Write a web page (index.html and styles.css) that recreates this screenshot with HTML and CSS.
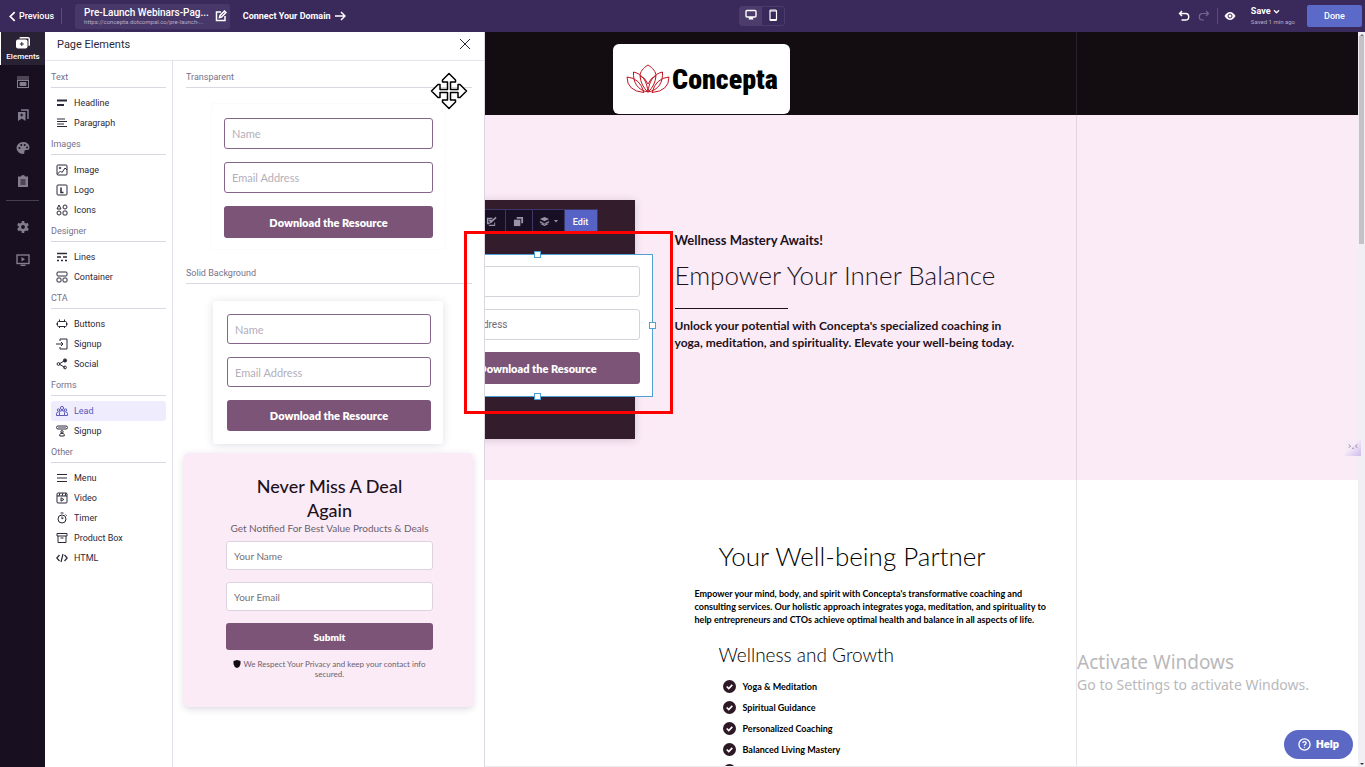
FILE: index.html
```html
<!DOCTYPE html>
<html lang="en">
<head>
    <meta charset="utf-8">
    <title>Page Builder</title>
    <link rel="stylesheet" href="styles.css">
</head>
<body>
    <svg class="sprite" aria-hidden="true">
        <symbol id="i-headline" viewBox="0 0 12 12"><path d="M1 3.500h10M1 8h7" stroke-width="2"/></symbol>
        <symbol id="i-paragraph" viewBox="0 0 12 12"><path d="M1 2h8M1 4.500h10M1 7h7M1 9.500h10"/></symbol>
        <symbol id="i-image" viewBox="0 0 12 12"><rect x="1" y="1" width="10" height="10" rx="1"/><path d="M1.500 10l3-3 1.500 1.500L9 4l2 2"/><circle cx="4" cy="4" r=".8"/></symbol>
        <symbol id="i-logo" viewBox="0 0 12 12"><rect x="1" y="1" width="10" height="10" rx="1"/><path d="M5 3.500v5h2.500" stroke-width="1.500"/></symbol>
        <symbol id="i-icons" viewBox="0 0 12 12"><path d="M3 1L5 5H1z"/><circle cx="9" cy="3" r="2"/><circle cx="3" cy="9" r="2"/><rect x="7" y="7" width="4" height="4" rx="1"/></symbol>
        <symbol id="i-lines" viewBox="0 0 12 12"><path d="M1 2.500h10M1 6h4M7 6h4M1 9.500h2M5 9.500h2M9 9.500h2" stroke-width="1.400"/></symbol>
        <symbol id="i-container" viewBox="0 0 12 12"><rect x="1" y="1" width="10" height="4" rx="1"/><rect x="1" y="7" width="4" height="4" rx="1"/><rect x="7" y="7" width="4" height="4" rx="1"/></symbol>
        <symbol id="i-buttons" viewBox="0 0 12 12"><rect x="1.500" y="3.500" width="9" height="5" rx="1"/><path d="M0 6h1.500M10.500 6h1.500M3.500 1.500v2M8.500 1.500v2M3.500 8.500v1.500M8.500 8.500v1.500"/></symbol>
        <symbol id="i-enter" viewBox="0 0 12 12"><path d="M4 3V1h7v10H4V9M0 6h7M5 4l2 2-2 2"/></symbol>
        <symbol id="i-social" viewBox="0 0 12 12"><path d="M9 2.500L3 6l6 3.500"/><circle cx="9" cy="2.500" r="1.600" fill="currentColor"/><circle cx="2.500" cy="6" r="1.400"/><circle cx="9" cy="9.500" r="1.400"/></symbol>
        <symbol id="i-lead" viewBox="0 0 12 12"><circle cx="6" cy="3" r="1.600"/><circle cx="2.500" cy="5" r="1.200"/><circle cx="9.500" cy="5" r="1.200"/><path d="M3.500 10.500V7.500Q3.500 5.500 6 5.500T8.500 7.500v3zM3.500 10.500h-3v-2q0-1.500 2-1.500M8.500 10.500h3v-2q0-1.500-2-1.500"/></symbol>
        <symbol id="i-signup" viewBox="0 0 12 12"><rect x="0.500" y="1" width="11" height="3" rx="1.500"/><path d="M2.500 2.500h7" stroke-dasharray="1 1"/><circle cx="6" cy="6.800" r="1.200"/><path d="M3.800 11V9.500Q4 8.300 6 8.300T8.200 9.500V11z"/></symbol>
        <symbol id="i-menu" viewBox="0 0 12 12"><path d="M1 2.500h10M1 6h10M1 9.500h10" stroke-width="1.200"/></symbol>
        <symbol id="i-video" viewBox="0 0 12 12"><rect x="1" y="1" width="10" height="10" rx="1"/><path d="M1 4h10M4 1L3 4M7 1L6 4M10 1L9 4M5 5.800v3.400L7.800 7.500z"/></symbol>
        <symbol id="i-timer" viewBox="0 0 12 12"><circle cx="6" cy="7" r="4"/><path d="M6 7V4.500M4.500 1h3M9.500 2.500l1.200 1.200M6 7l1.500-1"/></symbol>
        <symbol id="i-box" viewBox="0 0 12 12"><path d="M1 1.500h10v2.500H1zM2 4v6.500h8V4M4.500 6h3"/></symbol>
        <symbol id="i-code" viewBox="0 0 12 12"><path d="M3.500 3L.8 6l2.700 3M8.500 3l2.700 3-2.700 3M7 2L5 10" stroke-width="1.200"/></symbol>
        <symbol id="i-check" viewBox="0 0 14 14"><circle cx="7" cy="7" r="7" fill="currentColor" stroke="none"/><path d="M4 7l2.200 2.200L10 5.200" stroke="#fff" stroke-width="1.800"/></symbol>
    </svg>

    <header class="topbar">
        <div class="topbar-group">
            <button class="previous"><svg class="chevron" viewBox="0 0 8 12"><path d="M6.500 1L1.500 6l5 5" stroke-width="2"/></svg>Previous</button>
            <span class="divider"></span>
            <div class="page-name">
                <div>
                    <div class="page-title">Pre-Launch Webinars-Pag...</div>
                    <div class="page-url">https://concepta.dotcompal.co/pre-launch-...</div>
                </div>
                <button aria-label="Rename page"><svg class="icon" viewBox="0 0 12 12"><path d="M6 2H1.500v8.500H10V6M4.500 7.500l.5-2L9.500 1l1.500 1.500L6.500 7z" stroke-width="1.500"/></svg></button>
            </div>
            <a class="connect" href="#">Connect Your Domain <svg class="icon" viewBox="0 0 12 12"><path d="M1 6h10M7 2l4 4-4 4" stroke-width="1.500"/></svg></a>
        </div>
        <div class="devices">
            <button class="active" aria-label="Desktop view"><svg class="icon" viewBox="0 0 12 12"><rect x="1" y="1.500" width="10" height="6.500" rx="1" stroke-width="1.400"/><path d="M3.500 10.500h5L7.500 8h-3z" fill="currentColor" stroke="none"/></svg></button>
            <button aria-label="Mobile view"><svg class="icon" viewBox="0 0 12 12"><rect x="3" y="1" width="6.500" height="10.500" rx="1" stroke-width="1.200"/><path d="M3 2h6M3 10.500h6"/></svg></button>
        </div>
        <div class="topbar-group">
            <div class="history">
                <button aria-label="Undo"><svg class="icon" viewBox="0 0 12 12"><path d="M4 1L1.500 3.500 4 6M1.500 3.500H7.500a3 3 0 010 6.500H3.500" stroke-width="1.400"/></svg></button>
                <button class="disabled" aria-label="Redo" disabled><svg class="icon" viewBox="0 0 12 12"><path d="M8 1l2.500 2.500L8 6M10.500 3.500H4.500a3 3 0 000 6.500h1.500" stroke-width="1.200"/></svg></button>
            </div>
            <span class="divider"></span>
            <button class="preview" aria-label="Preview"><svg class="icon" viewBox="0 0 12 12"><path d="M.5 6Q3 2 6 2t5.500 4Q9 10 6 10T.5 6z" fill="currentColor" stroke="none"/><circle cx="6" cy="6" r="2" stroke="#3a295b" fill="#fff"/></svg></button>
            <div class="save">
                <button>Save <svg viewBox="0 0 8 6"><path d="M1 1.500l3 3 3-3" stroke-width="1.500"/></svg></button>
                <small>Saved 1 min ago</small>
            </div>
            <button class="done">Done</button>
        </div>
    </header>

    <div class="workspace">
        <nav class="rail">
            <button class="rail-item active"><svg viewBox="0 0 14 12"><path d="M4 0h8q2 0 2 2v6q0 1-1.500 1V1.500H3.500Q3.500 0 4 0z" fill="currentColor" stroke="none"/><rect x="0" y="2.500" width="11.500" height="9" rx="2" fill="currentColor" stroke="none"/><path d="M5.800 5v4M3.800 7h4" stroke="#292134"/></svg>Elements</button>
            <button class="rail-item" aria-label="Sections"><svg viewBox="0 0 14 12"><path d="M1 1h12M1 3h12"/><rect x="1.500" y="4.500" width="11" height="7"/><path d="M4 6.500h6v3H4z" fill="currentColor"/></svg></button>
            <button class="rail-item" aria-label="Saved blocks"><svg viewBox="0 0 14 12"><path d="M5 1h7v9" stroke-width="1.500"/><path d="M2 3h7.500v9L5.800 9.500 2 12z" fill="currentColor" stroke="none"/><path d="M5.700 4.500v3M4.200 6h3" stroke="#180f21"/></svg></button>
            <button class="rail-item" aria-label="Theme"><svg viewBox="0 0 14 12"><path d="M7 0a6.500 6 0 000 12q2 0 1.300-1.800Q8 8 10 8h1.500Q13.500 8 13.500 5.500 13 0 7 0z" fill="currentColor" stroke="none"/><g fill="#180f21" stroke="none"><circle cx="3.500" cy="6" r="1"/><circle cx="5.300" cy="3" r="1"/><circle cx="8.700" cy="3" r="1"/><circle cx="11" cy="5.500" r="1"/></g></svg></button>
            <button class="rail-item" aria-label="Pages"><svg viewBox="0 0 14 12"><path d="M2 1.500h3q0-1.500 2-1.500t2 1.500h3V12H2z" fill="currentColor" stroke="none"/><path d="M4.500 5h5M4.500 7h5M4.500 9h5" stroke="#180f21"/></svg></button>
            <span class="rail-rule"></span>
            <button class="rail-item" aria-label="Settings"><svg viewBox="0 0 14 12"><circle cx="7" cy="6" r="3.200" stroke-width="2.600"/><path d="M7 0v2M7 10v2M1.800 3l1.800 1M10.400 8l1.800 1M1.800 9l1.800-1M10.400 4l1.800-1" stroke-width="2.600"/></svg></button>
            <button class="rail-item" aria-label="Tutorials"><svg viewBox="0 0 14 12"><rect x="1" y="1" width="12" height="8.500" stroke-width="1.400"/><path d="M5.500 3v4.500L9 5.200z" fill="currentColor" stroke="none"/><path d="M4.500 11.300h5" stroke-width="1.400"/></svg></button>
        </nav>

        <main class="canvas">
            <div class="site-header">
                <div class="brand">
                    <svg class="lotus" viewBox="0 0 44 30"><path d="M22 1C17 4 14 8 14 12q1 10 8 16 7-6 8-16C30 8 27 4 22 1zM22 28C21 18 17 10 7.500 8 7 18 11 26 22 28zM22 28c1-10 5-18 14.500-20C37 18 33 26 22 28zM18 28.500Q14 14 1 13 1 27 18 28.500zM26 28.500Q30 14 43 13 43 27 26 28.500zM14 12q5 1 8 8 3-7 8-8"/></svg>
                    <span>Concepta</span>
                </div>
            </div>

            <section class="hero">
                <div class="container hero-grid">
                    <div class="hero-media">
                        <div class="block-tools">
                            <button aria-label="Style"><svg class="icon" viewBox="0 0 12 12"><path d="M1 2h6v1.500H2.500V7H4v2H1zM5 9.500h4V7h1v4H3v-1z" fill="currentColor" stroke="none"/><path d="M4.500 7.500L11 1.500M3 5h3" stroke-width="1.800"/></svg></button>
                            <button aria-label="Duplicate"><svg class="icon" viewBox="0 0 12 12"><rect x="1" y="4" width="7" height="7" fill="currentColor" stroke="none"/><path d="M4 3V1h7v7H9V3z" fill="currentColor" stroke="none"/></svg></button>
                            <button class="layers" aria-label="Layers"><svg class="icon" viewBox="0 0 12 12"><path d="M6 1l5 2.300L6 5.600 1 3.300zM1 5.500l5 2.300 5-2.300V7L6 9.200 1 7zM1 8.500l5 2.300 5-2.300" fill="currentColor" stroke="none"/></svg><svg class="caret" viewBox="0 0 4 3"><path d="M0 0h4L2 2.500z" fill="currentColor" stroke="none"/></svg></button>
                            <button class="edit">Edit</button>
                        </div>
                        <form class="lead-form selected">
                            <input type="text" placeholder="Name" aria-label="Name">
                            <input type="email" placeholder="Email Address" aria-label="Email Address">
                            <button type="button" class="cta">Download the Resource</button>
                            <span class="handle handle-top"></span>
                            <span class="handle handle-right"></span>
                            <span class="handle handle-bottom"></span>
                        </form>
                    </div>
                    <div class="hero-text">
                        <p class="kicker">Wellness Mastery Awaits!</p>
                        <h1>Empower Your Inner Balance</h1>
                        <hr>
                        <p class="lede">Unlock your potential with Concepta's specialized coaching in yoga, meditation, and spirituality. Elevate your well-being today.</p>
                    </div>
                </div>
            </section>

            <section class="partner">
                <div class="container">
                    <div class="partner-text">
                        <h2>Your Well-being Partner</h2>
                        <p>Empower your mind, body, and spirit with Concepta's transformative coaching and consulting services. Our holistic approach integrates yoga, meditation, and spirituality to help entrepreneurs and CTOs achieve optimal health and balance in all aspects of life.</p>
                        <h3>Wellness and Growth</h3>
                        <ul>
                            <li><svg><use href="#i-check"/></svg>Yoga &amp; Meditation</li>
                            <li><svg><use href="#i-check"/></svg>Spiritual Guidance</li>
                            <li><svg><use href="#i-check"/></svg>Personalized Coaching</li>
                            <li><svg><use href="#i-check"/></svg>Balanced Living Mastery</li>
                            <li><svg><use href="#i-check"/></svg></li>
                        </ul>
                    </div>
                </div>
            </section>
        </main>

        <div class="scrollbar"><span class="arrow up"></span><span class="thumb"></span><span class="arrow down"></span></div>

        <aside class="panel">
            <div class="panel-header">
                <span>Page Elements</span>
                <button aria-label="Close"><svg class="icon" viewBox="0 0 12 12"><path d="M1 1l10 10M11 1L1 11"/></svg></button>
            </div>
            <div class="panel-body">
                <div class="element-list">
                    <h4>Text</h4>
                    <a href="#"><svg class="icon"><use href="#i-headline"/></svg>Headline</a>
                    <a href="#"><svg class="icon"><use href="#i-paragraph"/></svg>Paragraph</a>
                    <h4>Images</h4>
                    <a href="#"><svg class="icon"><use href="#i-image"/></svg>Image</a>
                    <a href="#"><svg class="icon"><use href="#i-logo"/></svg>Logo</a>
                    <a href="#"><svg class="icon"><use href="#i-icons"/></svg>Icons</a>
                    <h4>Designer</h4>
                    <a href="#"><svg class="icon"><use href="#i-lines"/></svg>Lines</a>
                    <a href="#"><svg class="icon"><use href="#i-container"/></svg>Container</a>
                    <h4>CTA</h4>
                    <a href="#"><svg class="icon"><use href="#i-buttons"/></svg>Buttons</a>
                    <a href="#"><svg class="icon"><use href="#i-enter"/></svg>Signup</a>
                    <a href="#"><svg class="icon"><use href="#i-social"/></svg>Social</a>
                    <h4>Forms</h4>
                    <a href="#" class="active"><svg class="icon"><use href="#i-lead"/></svg>Lead</a>
                    <a href="#"><svg class="icon"><use href="#i-signup"/></svg>Signup</a>
                    <h4>Other</h4>
                    <a href="#"><svg class="icon"><use href="#i-menu"/></svg>Menu</a>
                    <a href="#"><svg class="icon"><use href="#i-video"/></svg>Video</a>
                    <a href="#"><svg class="icon"><use href="#i-timer"/></svg>Timer</a>
                    <a href="#"><svg class="icon"><use href="#i-box"/></svg>Product Box</a>
                    <a href="#"><svg class="icon"><use href="#i-code"/></svg>HTML</a>
                </div>
                <div class="templates">
                    <h4>Transparent</h4>
                    <form class="lead-form transparent">
                        <input type="text" placeholder="Name" aria-label="Name">
                        <input type="email" placeholder="Email Address" aria-label="Email Address">
                        <button type="button" class="cta">Download the Resource</button>
                    </form>
                    <h4>Solid Background</h4>
                    <form class="lead-form solid">
                        <input type="text" placeholder="Name" aria-label="Name">
                        <input type="email" placeholder="Email Address" aria-label="Email Address">
                        <button type="button" class="cta">Download the Resource</button>
                    </form>
                    <form class="deal-form">
                        <h3>Never Miss A Deal Again</h3>
                        <p>Get Notified For Best Value Products &amp; Deals</p>
                        <input type="text" placeholder="Your Name" aria-label="Your Name">
                        <input type="email" placeholder="Your Email" aria-label="Your Email">
                        <button type="button" class="cta">Submit</button>
                        <small><svg viewBox="0 0 8 8"><path d="M4 0l3.500 1v3Q7 7 4 8 1 7 .5 4V1z" fill="currentColor" stroke="none"/></svg> We Respect Your Privacy and keep your contact info secured.</small>
                    </form>
                </div>
            </div>
        </aside>

        <div class="highlight"></div>
        <svg class="move-cursor" viewBox="0 0 38 38"><path d="M19 1.500l6.500 6.500v2h-5v7.500h7.500v-5h2L36.500 19 30 25.500h-2v-5h-7.500v7.500h5v2L19 36.500 12.500 30v-2h5v-7.500H10v5H8L1.500 19 8 12.500h2v5h7.500V10h-5V8z"/></svg>

        <div class="watermark">
            <div class="watermark-title">Activate Windows</div>
            <div>Go to Settings to activate Windows.</div>
        </div>
        <button class="chat-tab" aria-label="Assistant"><svg viewBox="0 0 12 8"><path d="M1 1l2 2-2 2M11 1L9 3l2 2M5 5.500h2"/></svg></button>
        <button class="help"><svg viewBox="0 0 14 14"><circle cx="7" cy="7" r="6" stroke-width="1.400"/><path d="M5.200 5.500q0-1.700 1.800-1.700t1.800 1.600Q8.800 6.500 7 7.500v.8M7 9.500v1" stroke-width="1.400"/></svg>Help</button>
    </div>
</body>
</html>
```
FILE: styles.css
```css
* {
    box-sizing: border-box;
}

body {
    margin: 0;
    height: 100vh;
    display: flex;
    flex-direction: column;
    overflow: hidden;
    font-family: Roboto, "Liberation Sans", sans-serif;
    font-size: 9px;
    color: #2d2838;
}

h1, h2, h3, h4, p, ul {
    margin: 0;
    padding: 0;
    font-weight: normal;
}

button {
    font: inherit;
    color: inherit;
    background: none;
    border: 0;
    padding: 0;
    cursor: pointer;
}

a {
    color: inherit;
    text-decoration: none;
}

svg {
    fill: none;
    stroke: currentColor;
    flex-shrink: 0;
}

.sprite {
    display: none;
}

.icon {
    width: 12px;
    height: 12px;
}

/* top bar */
.topbar {
    height: 32px;
    flex-shrink: 0;
    display: flex;
    justify-content: space-between;
    align-items: center;
    padding: 0 3px 0 9px;
    background: #3a295b;
    color: #fff;
}

.topbar-group {
    display: flex;
    align-items: center;
}

.topbar .icon {
    display: block;
}

.divider {
    width: 1px;
    height: 16px;
    background: #5a4b77;
}

.previous {
    display: flex;
    align-items: center;
    gap: 3px;
    margin-right: 7px;
    font-size: 9px;
    font-weight: 500;
}

.chevron {
    width: 7px;
    height: 11px;
}

.page-name {
    display: flex;
    align-items: center;
    gap: 6px;
    height: 25px;
    margin: 0 13px;
    padding: 0 3px 0 9px;
    border-radius: 3px;
    background: #483869;
}

.page-title {
    font-size: 10px;
    line-height: 11px;
    font-weight: 500;
}

.page-url {
    font-size: 6px;
    line-height: 8px;
    white-space: nowrap;
    color: #b5abc7;
}

.connect {
    display: flex;
    align-items: center;
    gap: 3px;
    font-size: 9px;
    font-weight: 700;
}

.devices {
    display: flex;
    border: 1px solid #4b3c6b;
    border-radius: 3px;
}

.devices button {
    padding: 2px 5px 4px;
}

.devices .active {
    background: #4b3c6b;
}

.history {
    display: flex;
    gap: 8px;
    margin-right: 7px;
}

.disabled {
    color: #75678f;
}

.preview {
    margin: 0 15px 0 6px;
}

.save {
    display: flex;
    flex-direction: column;
    align-items: flex-start;
    margin-right: 12px;
}

.save button {
    font-size: 9px;
    line-height: 12px;
    font-weight: 700;
}

.save svg {
    width: 7px;
    height: 5px;
}

.save small {
    font-size: 6px;
    line-height: 10px;
    color: #b5abc7;
}

.done {
    width: 55px;
    height: 22px;
    border-radius: 2px;
    background: #5b69c8;
    font-weight: 500;
    font-size: 9px;
}

/* workspace */
.workspace {
    position: relative;
    flex: 1;
    min-height: 0;
    display: flex;
}

.rail {
    width: 45px;
    flex-shrink: 0;
    display: flex;
    flex-direction: column;
    background: #180f21;
    color: #847d8e;
}

.rail-item {
    height: 33px;
    display: flex;
    flex-direction: column;
    align-items: center;
    justify-content: center;
    gap: 3px;
}

.rail-item svg {
    width: 14px;
    height: 12px;
}

.rail-item.active {
    color: #fff;
    background: #292134;
    border-left: 1px solid #fff;
    font-size: 8px;
    line-height: 9px;
    font-weight: 500;
}

.rail-rule {
    height: 1px;
    margin: 3px 6px 9px;
    background: #463f50;
}

/* element panel */
.panel {
    position: absolute;
    top: 0;
    bottom: 0;
    left: 45px;
    width: 440px;
    display: flex;
    flex-direction: column;
    background: #fff;
    border-right: 1px solid #dcd6e2;
}

.panel-header {
    height: 29px;
    flex-shrink: 0;
    display: flex;
    justify-content: space-between;
    align-items: center;
    padding: 0 13px 4px 12px;
    border-bottom: 1px solid #e6e5ec;
    font-size: 11px;
}

.panel-header button {
    display: flex;
}

.panel-body {
    flex: 1;
    min-height: 0;
    display: flex;
}

.panel h4 {
    padding: 4px 0 3px;
    margin-bottom: 5px;
    border-bottom: 1px solid #d9d8e2;
    font-size: 9px;
    line-height: 14px;
    color: #77718a;
}

.element-list {
    width: 128px;
    flex-shrink: 0;
    padding: 5px 6px;
    border-right: 1px solid #e0dfe7;
}

.element-list a {
    height: 20px;
    display: flex;
    align-items: center;
    gap: 6px;
    padding-left: 5px;
    border-radius: 3px;
}

.element-list a.active {
    background: #efecfd;
    color: #5b58b8;
}

.templates {
    flex: 1;
    min-width: 0;
    padding: 5px 12px 5px 13px;
    overflow: hidden;
}

/* forms */
.lead-form {
    display: flex;
    flex-direction: column;
    gap: 13px;
    border-radius: 3px;
}

input {
    width: 100%;
    height: 31px;
    padding: 0 7px;
    background: #fff;
    border: 1px solid #86658a;
    border-radius: 3px;
    font-family: Lato, sans-serif;
    font-size: 11px;
}

input::placeholder {
    color: #b3aebb;
}

.cta {
    height: 32px;
    border-radius: 3px;
    background: #7b5478;
    color: #fff;
    font-family: Lato, sans-serif;
    font-size: 11px;
    font-weight: 800;
}

.transparent {
    margin: 15px 26px 12px 25px;
    padding: 14px 12px 11px;
    border: 1px solid #fbfafc;
}

.solid {
    margin: 17px 29px 9px 27px;
    padding: 13px 12px 13px 14px;
    box-shadow: 0 1px 8px rgba(60, 40, 80, 0.16);
}

.solid input {
    height: 30px;
}

.solid .cta {
    height: 31px;
}

.selected {
    position: relative;
    gap: 12px;
    width: 230px;
    padding: 11px 12px 12px;
    border: 1px solid #4d9fd6;
    border-radius: 0;
    background: #fff;
}

.selected input {
    border-color: #d5d3da;
    font-family: Roboto, sans-serif;
    font-size: 10px;
}

.selected input::placeholder {
    color: #6f6b75;
}

.handle {
    position: absolute;
    width: 7px;
    height: 7px;
    border: 1px solid #4d9fd6;
    background: #fff;
}

.handle-top {
    top: -4px;
    left: 50%;
    margin-left: -4px;
}

.handle-bottom {
    bottom: -4px;
    left: 50%;
    margin-left: -4px;
}

.handle-right {
    right: -4px;
    top: 50%;
    margin-top: -4px;
}

.deal-form {
    display: flex;
    flex-direction: column;
    align-items: stretch;
    margin: 0 -1px 0 -2px;
    padding: 21px 40px 28px 42px;
    border-radius: 5px;
    background: #fbebf6;
    box-shadow: 0 2px 7px rgba(60, 40, 80, 0.18);
    font-family: Lato, sans-serif;
    text-align: center;
}

.deal-form h3 {
    padding: 0 30px;
    font-size: 18px;
    line-height: 24px;
    font-weight: 500;
    color: #1c121c;
}

.deal-form p {
    font-size: 10px;
    line-height: 12px;
    margin-bottom: 7px;
    color: #6b5f6e;
}

.deal-form input {
    height: 29px;
    margin-bottom: 12px;
    border-color: #ddd3e0;
    font-size: 10px;
}

.deal-form input::placeholder {
    color: #757078;
}

.deal-form .cta {
    height: 27px;
    font-size: 10px;
}

.deal-form small {
    margin-top: 9px;
    font-size: 8px;
    line-height: 10px;
    color: #6b5f6e;
}

.deal-form small svg {
    width: 8px;
    height: 8px;
    color: #120a14;
    vertical-align: -1px;
}

/* edited page */
.canvas {
    position: relative;
    flex: 1;
    min-width: 0;
    overflow: hidden;
    background: #fff;
    border-bottom: 1px solid #ececef;
    font-family: Lato, sans-serif;
    color: #1c121c;
}

/* right edge of the page grid */
.canvas::after {
    content: "";
    position: absolute;
    top: 0;
    bottom: 0;
    left: calc(50% + 374px);
    width: 1px;
    background: rgba(130, 120, 140, 0.2);
}

.container {
    width: 750px;
    margin: 0 auto;
}

.site-header {
    display: flex;
    justify-content: center;
    padding: 12px 0 1px;
    background: #130c10;
}

.brand {
    display: flex;
    align-items: center;
    gap: 2px;
    height: 70px;
    padding: 0 12px 0 13px;
    border-radius: 6px;
    background: #fff;
    color: #000;
    font-family: "Liberation Sans Narrow", "Roboto Condensed", Roboto, sans-serif;
    font-size: 28px;
    font-weight: 900;
}

.lotus {
    width: 44px;
    height: 32px;
    color: #c1121f;
}

.hero {
    padding: 85px 0 41px;
    background: #fbebf6;
}

.hero-grid {
    display: grid;
    grid-template-columns: 308px 1fr;
    gap: 40px;
}

.hero-media {
    position: relative;
    padding: 54px 0 42px 96px;
    background: #331c2b;
    box-shadow: 0 1px 8px rgba(60, 40, 80, 0.2);
}

.block-tools {
    position: absolute;
    top: 9px;
    right: 37px;
    display: flex;
    height: 25px;
    background: #180f24;
    border: 1px solid #3b3766;
    color: #9a93a6;
    font-family: Roboto, sans-serif;
}

.block-tools button {
    display: flex;
    align-items: center;
    justify-content: center;
    width: 27px;
    border-right: 1px solid #3b3766;
}

.block-tools .layers {
    width: 32px;
    gap: 4px;
}

.block-tools .icon {
    width: 11px;
    height: 11px;
}

.caret {
    width: 4px;
    height: 3px;
}

.block-tools .edit {
    width: 32px;
    background: #5662c4;
    border: 0;
    color: #fff;
    font-weight: 500;
}

.hero-text {
    padding: 32px 48px 0 0;
}

.kicker {
    font-size: 13px;
    line-height: 17px;
    font-weight: 700;
}

h1, h2 {
    font-size: 26px;
    line-height: 32px;
    font-weight: 300;
}

h1 {
    margin: 10px 0 17px;
}

hr {
    width: 113px;
    height: 1px;
    margin: 0 0 8px;
    border: 0;
    background: #1c121c;
}

.lede {
    font-size: 12px;
    line-height: 17px;
    font-weight: 700;
}

.partner {
    padding-top: 60px;
    color: #000;
}

.partner-text {
    width: 360px;
    margin-left: 368px;
}

.partner h2 {
    padding-left: 24px;
}

.partner p {
    margin: 15px 0 18px;
    font-size: 9px;
    line-height: 13px;
    font-weight: 700;
}

.partner h3 {
    padding-left: 24px;
    font-size: 19px;
    line-height: 22px;
    font-weight: 300;
}

.partner ul {
    margin: 10px 0 0 28px;
    list-style: none;
}

.partner li {
    display: flex;
    align-items: center;
    gap: 7px;
    height: 21px;
    font-size: 9px;
    font-weight: 700;
}

.partner li svg {
    width: 13px;
    height: 13px;
    color: #2d1825;
}

.scrollbar {
    width: 7px;
    flex-shrink: 0;
    display: flex;
    flex-direction: column;
    align-items: center;
    padding: 2px 0;
    background: #f1eff3;
}

.thumb {
    width: 5px;
    height: 208px;
    margin-bottom: auto;
    background: #c4c2c7;
}

.arrow {
    border: 2px solid transparent;
}

.up {
    border-top: 0;
    border-bottom-color: #777;
}

.down {
    border-bottom: 0;
    border-top-color: #333;
}

/* things floating over the page */
.highlight {
    position: absolute;
    left: 464px;
    top: 199px;
    width: 209px;
    height: 183px;
    border: 3px solid #f00;
}

.move-cursor {
    position: absolute;
    left: 430px;
    top: 40px;
    width: 38px;
    height: 38px;
    fill: #fff;
    stroke: #000;
    stroke-width: 1.5;
    stroke-linejoin: round;
}

.watermark {
    position: absolute;
    right: 56px;
    bottom: 72px;
    font-family: "Noto Sans", "Open Sans", sans-serif;
    font-size: 14px;
    line-height: 20px;
    color: #b9b9bb;
}

.watermark-title {
    font-size: 19px;
    line-height: 25px;
}

.chat-tab {
    position: absolute;
    right: 4px;
    top: 408px;
    width: 16px;
    height: 16px;
    background: linear-gradient(135deg, #f7eaf7 40%, #cdbcf0);
    color: #77718a;
}

.chat-tab svg {
    width: 10px;
    height: 8px;
}

.help {
    position: absolute;
    right: 12px;
    bottom: 8px;
    display: flex;
    align-items: center;
    justify-content: center;
    gap: 5px;
    width: 69px;
    height: 29px;
    border-radius: 15px;
    background: #5b69c4;
    color: #fff;
    font-size: 11px;
    font-weight: 900;
}

.help svg {
    width: 13px;
    height: 13px;
}
```
